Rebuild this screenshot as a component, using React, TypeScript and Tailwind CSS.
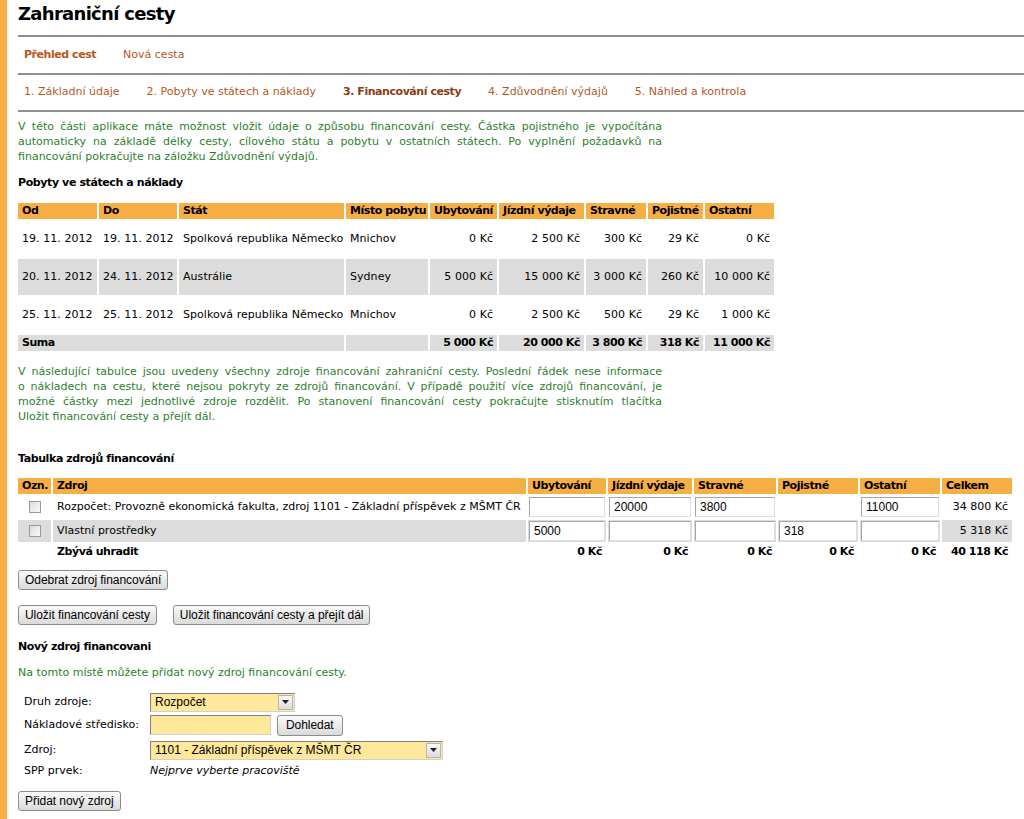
import React from 'react'

const stays = [
  { od: '19. 11. 2012', do: '19. 11. 2012', stat: 'Spolková republika Německo', misto: 'Mnichov', ub: '0 Kč', jizd: '2 500 Kč', strav: '300 Kč', poj: '29 Kč', ost: '0 Kč' },
  { od: '20. 11. 2012', do: '24. 11. 2012', stat: 'Austrálie', misto: 'Sydney', ub: '5 000 Kč', jizd: '15 000 Kč', strav: '3 000 Kč', poj: '260 Kč', ost: '10 000 Kč' },
  { od: '25. 11. 2012', do: '25. 11. 2012', stat: 'Spolková republika Německo', misto: 'Mnichov', ub: '0 Kč', jizd: '2 500 Kč', strav: '500 Kč', poj: '29 Kč', ost: '1 000 Kč' },
]

const sources = [
  { name: 'Rozpočet: Provozně ekonomická fakulta, zdroj 1101 - Základní příspěvek z MŠMT ČR', vals: ['', '20000', '3800', null, '11000'], total: '34 800 Kč' },
  { name: 'Vlastní prostředky', vals: ['5000', '', '', '318', ''], total: '5 318 Kč' },
]

const Btn = ({ children, className = '' }: { children: React.ReactNode; className?: string }) => (
  <button
    className={`h-[20px] px-[6px] border border-[#8c8c8c] rounded-[3px] bg-gradient-to-b from-[#fafafa] to-[#dadada] text-[12px] tracking-[-0.05px] text-black font-['Liberation_Sans',sans-serif] leading-none ${className}`}
  >
    {children}
  </button>
)

const Select = ({ value, className = '' }: { value: string; className?: string }) => (
  <div className={`h-[19px] flex items-center border border-[#7f7f7f] border-r-[#d0d0d0] border-b-[#d0d0d0] bg-[#ffe89a] ${className}`}>
    <span className="flex-1 pl-[4px] text-[12px] font-['Liberation_Sans',sans-serif] truncate">{value}</span>
    <span className="w-[15px] h-[15px] mr-[1px] flex items-center justify-center border border-[#b5b5b5] bg-gradient-to-b from-[#fafafa] to-[#dcdcdc]">
      <svg width="7" height="4" viewBox="0 0 7 4"><path d="M0 0h7L3.5 4z" fill="#222" /></svg>
    </span>
  </div>
)

const Cell = ({ v }: { v: string | null }) =>
  v === null ? null : (
    <div className="h-[20px] mx-[1px] border border-[#a5a5a5] border-r-[#dedede] border-b-[#dedede] bg-white flex items-center pl-[4px] text-[12px] font-['Liberation_Sans',sans-serif]">
      {v}
    </div>
  )

export default function App() {
  return (
    <div className="min-h-screen flex bg-white font-['DejaVu_Sans',Verdana,sans-serif] text-[11px] text-black">
      <div className="w-[7px] shrink-0 bg-[#f7ae45]" />
      <div className="flex-1 pl-[11px] pb-[10px]">
        <h1 className="text-[18px] font-bold tracking-[-0.7px] leading-[28px]">Zahraniční cesty</h1>
        <div className="mt-[7px] border-t-2 border-[#8f8f8f]" />
        <div className="h-[36px] flex items-center gap-[27px] pl-[6px] text-[#b4581f]">
          <span className="font-bold tracking-[-0.45px]">Přehled cest</span>
          <span>Nová cesta</span>
        </div>
        <div className="border-t-2 border-[#8f8f8f]" />
        <div className="h-[35px] flex items-center gap-[27px] pl-[6px] text-[#b4581f]">
          <span>1. Základní údaje</span>
          <span>2. Pobyty ve státech a náklady</span>
          <span className="font-bold tracking-[-0.45px] text-[#8c3c14]">3. Financování cesty</span>
          <span>4. Zdůvodnění výdajů</span>
          <span>5. Náhled a kontrola</span>
        </div>
        <div className="border-t-2 border-[#8f8f8f]" />

        <p className="mt-[7px] w-[644px] text-justify leading-[15px] text-[#2d7f2d]">
          V této části aplikace máte možnost vložit údaje o způsobu financování cesty. Částka pojistného je vypočítána automaticky na základě délky cesty, cílového státu a pobytu v ostatních státech. Po vyplnění požadavků na financování pokračujte na záložku Zdůvodnění výdajů.
        </p>

        <h2 className="mt-[11px] font-bold tracking-[-0.4px] leading-[15px]">Pobyty ve státech a náklady</h2>

        <table className="mt-[11px] -ml-[2px] border-separate border-spacing-0.5 table-fixed w-[760px] tracking-[0.05px]">
          <colgroup>
            <col className="w-[79px]" />
            <col className="w-[78px]" />
            <col className="w-[165px]" />
            <col className="w-[82px]" />
            <col className="w-[67px]" />
            <col className="w-[85px]" />
            <col className="w-[60px]" />
            <col className="w-[55px]" />
            <col className="w-[69px]" />
          </colgroup>
          <thead>
            <tr className="bg-[#f7ae45] font-bold">
              {['Od', 'Do', 'Stát', 'Místo pobytu', 'Ubytování', 'Jízdní výdaje', 'Stravné', 'Pojistné', 'Ostatní'].map((h) => (
                <th key={h} className="text-left px-[4px] py-0 whitespace-nowrap tracking-[-0.45px] leading-[16px]">{h}</th>
              ))}
            </tr>
          </thead>
          <tbody>
            {stays.map((s, i) => (
              <tr key={i} className={`h-[36px] ${i === 1 ? 'bg-[#dcdcdc]' : ''}`}>
                <td className="px-[4px] whitespace-nowrap">{s.od}</td>
                <td className="px-[4px] whitespace-nowrap">{s.do}</td>
                <td className="px-[4px] whitespace-nowrap">{s.stat}</td>
                <td className="px-[4px]">{s.misto}</td>
                <td className="px-[4px] text-right">{s.ub}</td>
                <td className="px-[4px] text-right">{s.jizd}</td>
                <td className="px-[4px] text-right">{s.strav}</td>
                <td className="px-[4px] text-right">{s.poj}</td>
                <td className="px-[4px] text-right">{s.ost}</td>
              </tr>
            ))}
            <tr className="bg-[#dcdcdc] font-bold tracking-[-0.45px] leading-[16px]">
              <td colSpan={3} className="px-[4px]">Suma</td>
              <td />
              <td className="px-[4px] text-right whitespace-nowrap">5 000 Kč</td>
              <td className="px-[4px] text-right whitespace-nowrap">20 000 Kč</td>
              <td className="px-[4px] text-right whitespace-nowrap">3 800 Kč</td>
              <td className="px-[4px] text-right whitespace-nowrap">318 Kč</td>
              <td className="px-[4px] text-right whitespace-nowrap">11 000 Kč</td>
            </tr>
          </tbody>
        </table>

        <p className="mt-[11px] w-[644px] text-justify leading-[15px] text-[#2d7f2d]">
          V následující tabulce jsou uvedeny všechny zdroje financování zahraniční cesty. Poslední řádek nese informace o&nbsp;nákladech na cestu, které nejsou pokryty ze zdrojů financování. V případě použití více zdrojů financování, je možné částky mezi jednotlivé zdroje rozdělit. Po stanovení financování cesty pokračujte stisknutím tlačítka Uložit&nbsp;financování cesty a přejít dál.
        </p>

        <h2 className="mt-[27px] font-bold tracking-[-0.4px] leading-[15px]">Tabulka zdrojů financování</h2>

        <table className="mt-[10px] -ml-[2px] border-separate border-spacing-0.5 table-fixed w-[998px]">
          <colgroup>
            <col className="w-[33px]" />
            <col className="w-[473px]" />
            <col className="w-[78px]" />
            <col className="w-[84px]" />
            <col className="w-[82px]" />
            <col className="w-[80px]" />
            <col className="w-[80px]" />
            <col className="w-[70px]" />
          </colgroup>
          <thead>
            <tr className="bg-[#f7ae45] font-bold">
              {['Ozn.', 'Zdroj', 'Ubytování', 'Jízdní výdaje', 'Stravné', 'Pojistné', 'Ostatní', 'Celkem'].map((h) => (
                <th key={h} className="text-left px-[4px] py-0 whitespace-nowrap tracking-[-0.45px] leading-[16px]">{h}</th>
              ))}
            </tr>
          </thead>
          <tbody>
            {sources.map((s, i) => (
              <tr key={i} className={`h-[22px] ${i === 1 ? 'bg-[#dcdcdc]' : ''}`}>
                <td className="text-center">
                  <span className="inline-block w-[12px] h-[12px] border border-[#9a9a9a] bg-gradient-to-br from-[#dcdcdc] to-[#fafafa] align-middle" />
                </td>
                <td className="px-[4px] whitespace-nowrap">{s.name}</td>
                {s.vals.map((v, j) => (
                  <td key={j} className="p-0">
                    <Cell v={v} />
                  </td>
                ))}
                <td className="px-[4px] text-right whitespace-nowrap">{s.total}</td>
              </tr>
            ))}
            <tr className="font-bold tracking-[-0.45px] h-[16px]">
              <td />
              <td className="px-[4px]">Zbývá uhradit</td>
              {['0 Kč', '0 Kč', '0 Kč', '0 Kč', '0 Kč'].map((v, j) => (
                <td key={j} className="px-[4px] text-right">{v}</td>
              ))}
              <td className="px-[4px] text-right whitespace-nowrap">40 118 Kč</td>
            </tr>
          </tbody>
        </table>

        <div className="mt-[7px]">
          <Btn>Odebrat zdroj financování</Btn>
        </div>
        <div className="mt-[15px] flex gap-[16px]">
          <Btn>Uložit financování cesty</Btn>
          <Btn>Uložit financování cesty a přejít dál</Btn>
        </div>

        <h2 className="mt-[14px] font-bold tracking-[-0.4px] leading-[15px]">Nový zdroj financovani</h2>
        <p className="mt-[11px] leading-[15px] text-[#2d7f2d]">Na tomto místě můžete přidat nový zdroj financování cesty.</p>

        <div className="mt-[13px] pl-[6px] grid grid-cols-[126px_1fr] gap-y-[3px] items-center">
          <span>Druh zdroje:</span>
          <Select value="Rozpočet" className="w-[145px]" />
          <span>Nákladové středisko:</span>
          <div className="flex items-center gap-[6px]">
            <div className="w-[121px] h-[20px] border border-[#7f7f7f] border-r-[#d0d0d0] border-b-[#d0d0d0] bg-[#ffe89a]" />
            <Btn className="h-[21px] px-[8px]">Dohledat</Btn>
          </div>
          <span className="mt-[2px]">Zdroj:</span>
          <Select value="1101 - Základní příspěvek z MŠMT ČR" className="w-[293px] mt-[2px]" />
          <span>SPP prvek:</span>
          <span className="italic">Nejprve vyberte pracoviště</span>
        </div>

        <div className="mt-[12px]">
          <Btn>Přidat nový zdroj</Btn>
        </div>
      </div>
    </div>
  )
}
